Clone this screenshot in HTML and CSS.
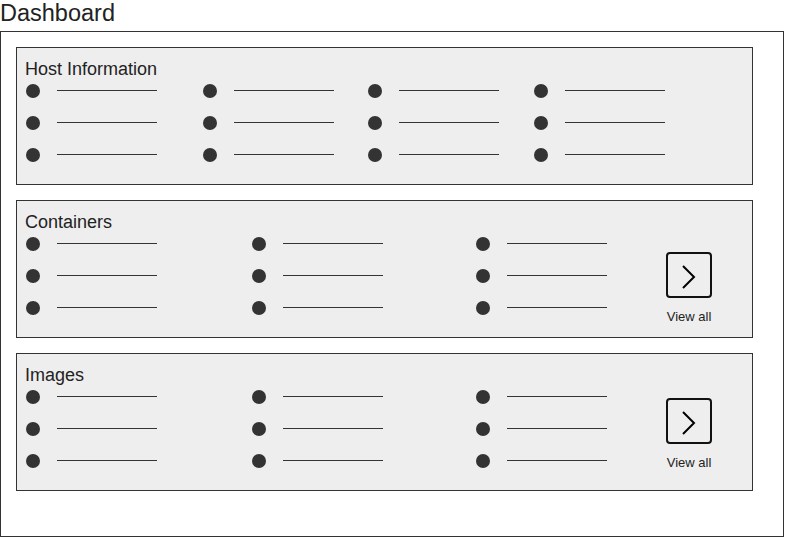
FILE: index.html
```html
<!DOCTYPE html>
<html lang="en">
<head>
<meta charset="utf-8">
<title>Dashboard</title>
<link rel="stylesheet" href="styles.css">
</head>
<body>
  <h1 class="page-title">Dashboard</h1>
  <main class="board">
    <section class="panel">
      <h2 class="panel-title">Host Information</h2>
      <div class="panel-body">
        <ul class="list list--host">
          <li class="item"><span class="dot"></span><span class="bar"></span></li>
          <li class="item"><span class="dot"></span><span class="bar"></span></li>
          <li class="item"><span class="dot"></span><span class="bar"></span></li>
          <li class="item"><span class="dot"></span><span class="bar"></span></li>
          <li class="item"><span class="dot"></span><span class="bar"></span></li>
          <li class="item"><span class="dot"></span><span class="bar"></span></li>
          <li class="item"><span class="dot"></span><span class="bar"></span></li>
          <li class="item"><span class="dot"></span><span class="bar"></span></li>
          <li class="item"><span class="dot"></span><span class="bar"></span></li>
          <li class="item"><span class="dot"></span><span class="bar"></span></li>
          <li class="item"><span class="dot"></span><span class="bar"></span></li>
          <li class="item"><span class="dot"></span><span class="bar"></span></li>
        </ul>
      </div>
    </section>

    <section class="panel">
      <h2 class="panel-title">Containers</h2>
      <div class="panel-body">
        <ul class="list list--three">
          <li class="item"><span class="dot"></span><span class="bar"></span></li>
          <li class="item"><span class="dot"></span><span class="bar"></span></li>
          <li class="item"><span class="dot"></span><span class="bar"></span></li>
          <li class="item"><span class="dot"></span><span class="bar"></span></li>
          <li class="item"><span class="dot"></span><span class="bar"></span></li>
          <li class="item"><span class="dot"></span><span class="bar"></span></li>
          <li class="item"><span class="dot"></span><span class="bar"></span></li>
          <li class="item"><span class="dot"></span><span class="bar"></span></li>
          <li class="item"><span class="dot"></span><span class="bar"></span></li>
        </ul>
        <a class="viewall viewall--low" href="#">
          <span class="viewall-btn">
            <svg width="42" height="42" viewBox="0 0 42 42"><polyline points="15,12 26,23 15,34" fill="none" stroke="#000" stroke-width="2"/></svg>
          </span>
          <span class="viewall-label">View all</span>
        </a>
      </div>
    </section>

    <section class="panel">
      <h2 class="panel-title">Images</h2>
      <div class="panel-body">
        <ul class="list list--three">
          <li class="item"><span class="dot"></span><span class="bar"></span></li>
          <li class="item"><span class="dot"></span><span class="bar"></span></li>
          <li class="item"><span class="dot"></span><span class="bar"></span></li>
          <li class="item"><span class="dot"></span><span class="bar"></span></li>
          <li class="item"><span class="dot"></span><span class="bar"></span></li>
          <li class="item"><span class="dot"></span><span class="bar"></span></li>
          <li class="item"><span class="dot"></span><span class="bar"></span></li>
          <li class="item"><span class="dot"></span><span class="bar"></span></li>
          <li class="item"><span class="dot"></span><span class="bar"></span></li>
        </ul>
        <a class="viewall" href="#">
          <span class="viewall-btn">
            <svg width="42" height="42" viewBox="0 0 42 42"><polyline points="15,12 26,23 15,34" fill="none" stroke="#000" stroke-width="2"/></svg>
          </span>
          <span class="viewall-label">View all</span>
        </a>
      </div>
    </section>
  </main>
</body>
</html>
```

FILE: styles.css
```css
* { box-sizing: border-box; }

html, body {
  margin: 0;
  padding: 0;
  background: #fff;
}

body {
  font-family: "Liberation Sans", Arial, Helvetica, sans-serif;
  color: #222;
}

.page-title {
  margin: 0 0 5px 0;
  font-size: 23.5px;
  font-weight: normal;
  line-height: 26px;
  color: #222;
}

.board {
  width: 784px;
  height: 506px;
  border: 1px solid #333;
  padding: 15px 0 0 15px;
  display: flex;
  flex-direction: column;
  gap: 15px;
}

.panel {
  width: 737px;
  height: 138px;
  flex: none;
  background: #eeeeee;
  border: 1px solid #333;
  padding: 11px 8px 0 8px;
}

.panel-title {
  margin: 0 0 5px 0;
  font-size: 18px;
  font-weight: normal;
  line-height: 20px;
  color: #222;
}

.panel-body {
  display: flex;
  align-items: flex-start;
}

.list {
  list-style: none;
  margin: 0;
  padding: 0 0 0 1px;
  flex: 1;
  display: grid;
  row-gap: 18px;
  grid-auto-flow: column;
  grid-template-rows: repeat(3, 14px);
}

.list--host {
  grid-template-columns: 177px 165px 166px 1fr;
}

.list--three {
  grid-template-columns: 226px 224px 1fr;
}

.item {
  display: flex;
  align-items: flex-start;
  height: 14px;
}

.dot {
  width: 14px;
  height: 14px;
  border-radius: 50%;
  background: #333;
  flex: none;
}

.bar {
  width: 100px;
  height: 1px;
  margin: 6px 0 0 17px;
  background: #333;
  flex: none;
}

.viewall {
  display: flex;
  flex-direction: column;
  align-items: center;
  width: 46px;
  margin: 8px 32px 0 0;
  text-decoration: none;
  color: #222;
  flex: none;
}

.viewall--low {
  margin-top: 15px;
}

.viewall-btn {
  width: 46px;
  height: 46px;
  border: 2px solid #111;
  border-radius: 4px;
  display: block;
}

.viewall-btn svg {
  display: block;
}

.viewall-label {
  margin-top: 11px;
  font-size: 13px;
  line-height: 15px;
  white-space: nowrap;
}
```
